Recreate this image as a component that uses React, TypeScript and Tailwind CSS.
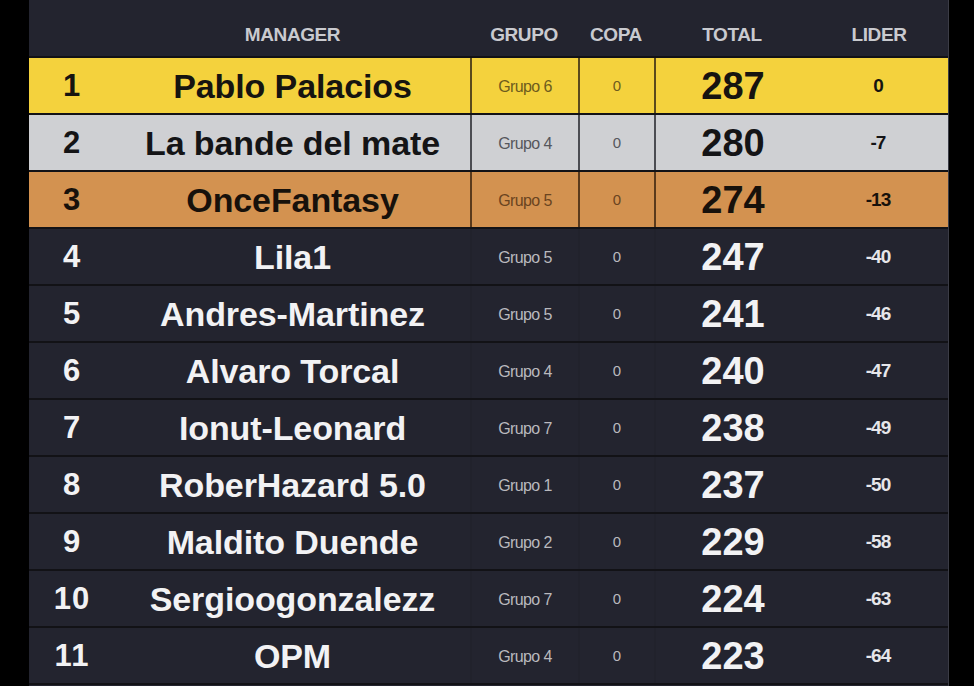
import React from "react";

type Row = { rank: number; name: string; grupo: string; copa: string; total: number; lider: string };

const rows: Row[] = [
  { rank: 1, name: "Pablo Palacios", grupo: "Grupo 6", copa: "0", total: 287, lider: "0" },
  { rank: 2, name: "La bande del mate", grupo: "Grupo 4", copa: "0", total: 280, lider: "-7" },
  { rank: 3, name: "OnceFantasy", grupo: "Grupo 5", copa: "0", total: 274, lider: "-13" },
  { rank: 4, name: "Lila1", grupo: "Grupo 5", copa: "0", total: 247, lider: "-40" },
  { rank: 5, name: "Andres-Martinez", grupo: "Grupo 5", copa: "0", total: 241, lider: "-46" },
  { rank: 6, name: "Alvaro Torcal", grupo: "Grupo 4", copa: "0", total: 240, lider: "-47" },
  { rank: 7, name: "Ionut-Leonard", grupo: "Grupo 7", copa: "0", total: 238, lider: "-49" },
  { rank: 8, name: "RoberHazard 5.0", grupo: "Grupo 1", copa: "0", total: 237, lider: "-50" },
  { rank: 9, name: "Maldito Duende", grupo: "Grupo 2", copa: "0", total: 229, lider: "-58" },
  { rank: 10, name: "Sergioogonzalezz", grupo: "Grupo 7", copa: "0", total: 224, lider: "-63" },
  { rank: 11, name: "OPM", grupo: "Grupo 4", copa: "0", total: 223, lider: "-64" },
];

const cols = "grid grid-cols-[86px_355px_108px_76px_156px_1fr]";

function rowStyle(rank: number) {
  if (rank === 1)
    return { bg: "bg-[#f4d23d]", main: "text-[#161410]", sub: "text-[#6e5c1e]", div: "border-[#5a4a1c]" };
  if (rank === 2)
    return { bg: "bg-[#cfd0d3]", main: "text-[#141416]", sub: "text-[#56575c]", div: "border-[#4c4d52]" };
  if (rank === 3)
    return { bg: "bg-[#d39250]", main: "text-[#17110b]", sub: "text-[#6a4420]", div: "border-[#5a3a1c]" };
  return { bg: "bg-[#23242f]", main: "text-[#f2f2f4]", sub: "text-[#b9b9be]", div: "border-[#21222c]" };
}

export default function App() {
  return (
    <div
      className="w-[974px] h-[686px] bg-black overflow-hidden flex"
      style={{ fontFamily: '"Liberation Sans", Arial, sans-serif' }}
    >
      <div className="ml-[29px] w-[920px] h-full bg-[#23242f] border-r border-[#3b3c46] flex flex-col">
        <div className={`${cols} h-[56px] items-end pb-[12px] text-[#c9cacf] font-bold text-[19px] tracking-[-0.4px] leading-none`}>
          <div />
          <div className="text-center">MANAGER</div>
          <div className="text-center">GRUPO</div>
          <div className="text-center">COPA</div>
          <div className="text-center">TOTAL</div>
          <div className="text-center">LIDER</div>
        </div>
        {rows.map((r) => {
          const s = rowStyle(r.rank);
          return (
            <div key={r.rank} className={`${cols} h-[57px] border-t-[2px] border-[#121216] ${s.bg}`}>
              <div className={`flex items-center justify-center font-bold text-[31px] tracking-[1px] ${s.main}`}>{r.rank}</div>
              <div className={`flex items-center justify-center font-bold text-[34px] tracking-[-0.1px] ${s.main}`}>{r.name}</div>
              <div className={`flex items-center justify-center border-l-[2px] ${s.div} text-[16px] tracking-[-0.6px] ${s.sub}`}>{r.grupo}</div>
              <div className={`flex items-center justify-center border-l-[2px] ${s.div} text-[15px] ${s.sub}`}>{r.copa}</div>
              <div className={`flex items-center justify-center border-l-[2px] ${s.div} font-bold text-[38px] ${s.main}`}>{r.total}</div>
              <div className={`flex items-center justify-center font-bold text-[19px] tracking-[-1px] pr-[2px] ${r.rank <= 3 ? s.main : "text-[#e6e6ea]"}`}>{r.lider}</div>
            </div>
          );
        })}
        <div className="border-t-[2px] border-[#121216] flex-1" />
      </div>
    </div>
  );
}
